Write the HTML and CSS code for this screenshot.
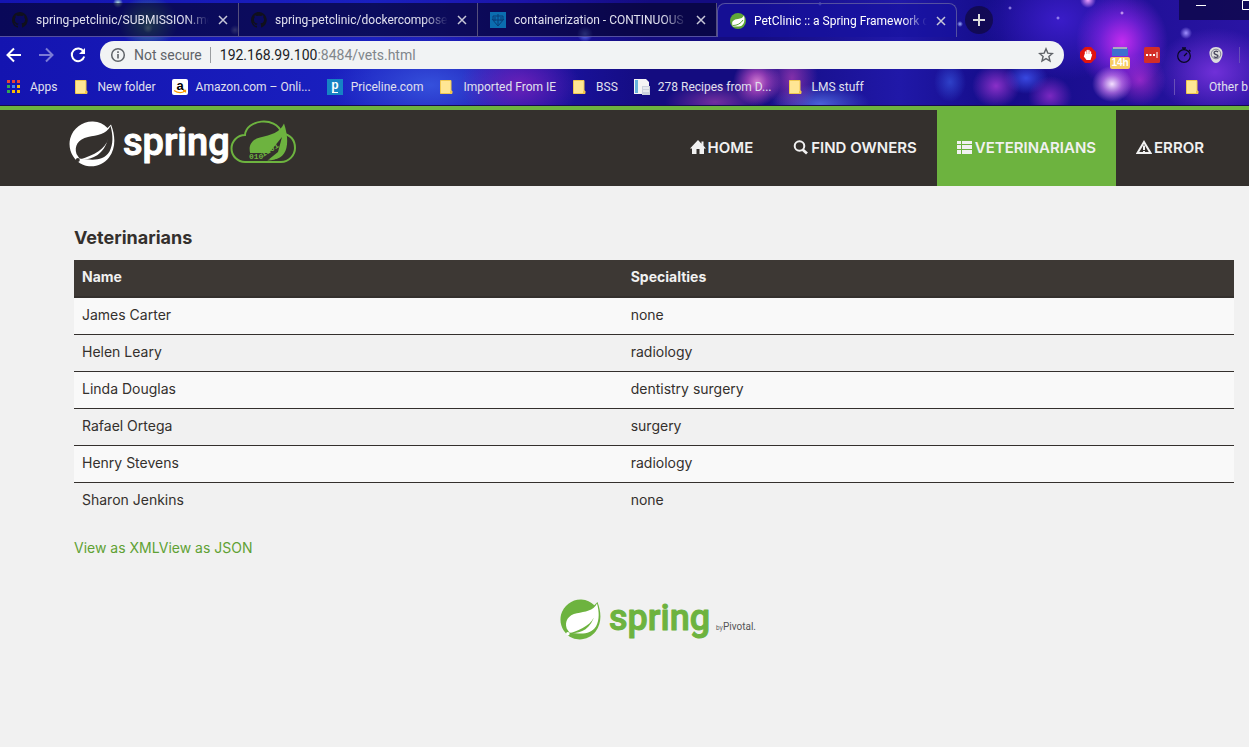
FILE: index.html
```html
<!DOCTYPE html>
<html lang="en">
<head>
<meta charset="utf-8">
<title>PetClinic :: a Spring Framework demonstration</title>
<link rel="stylesheet" href="styles.css">
</head>
<body>
<svg class="defs" aria-hidden="true">
  <symbol id="close" viewBox="0 0 12 12"><path d="M2 2l8 8M10 2l-8 8" stroke="currentColor" stroke-width="1.5"/></symbol>
  <symbol id="github" viewBox="0 0 16 16"><path fill="#10101c" d="M8 0C3.6 0 0 3.600 0 8c0 3.500 2.300 6.500 5.500 7.600.4.100.5-.2.500-.4v-1.400c-2.200.5-2.700-1-2.700-1-.4-.9-.9-1.200-.9-1.200-.7-.5.100-.5.100-.5.800.1 1.200.8 1.200.8.700 1.300 1.900.9 2.300.7.100-.5.300-.9.500-1.100-1.800-.2-3.600-.9-3.600-4 0-.9.300-1.600.8-2.100-.1-.2-.4-1 .1-2.100 0 0 .7-.2 2.200.8a7.700 7.700 0 0 1 4 0c1.500-1 2.200-.8 2.200-.8.400 1.100.2 1.900.1 2.100.5.600.8 1.300.8 2.100 0 3.100-1.900 3.700-3.700 3.900.3.300.6.800.6 1.500v2.200c0 .2.100.5.500.4A8 8 0 0 0 8 0z"/></symbol>
  <symbol id="folder" viewBox="0 0 16 16"><path d="M1.500 1.500h10.500v10.500h1v2.500h-11.500z" fill="#ffe694" stroke="#f0c850"/><path d="M11 14.500v-2.500h2v2.500z" fill="#f3c646"/></symbol>
  <symbol id="leaf" viewBox="0 0 46 46"><path d="M42 3.500C46.500 15 47 27 40 36.500 34 44.500 23 47.500 14 43.700 4 39.500-1.500 28 1.200 17.500 4 7 14 0 24 .5c6 .3 10.500 2.500 14.500 6.500z" fill="currentColor"/><path class="leaf-cut" d="M41.500 5C37.500 13.500 28 14 19 16 9 18 5 25 7.500 33l3 4.500C22 39 34 41 40.500 30.500 44.500 23 44 14 41.500 5z"/><path d="M39 17.500C37 28 25 34 11 38.500c12 .5 24-4.500 28-21z" fill="currentColor"/><circle class="leaf-cut" cx="8.800" cy="39" r="2"/></symbol>
</svg>

<header class="browser">
  <div class="tabstrip">
    <div class="tab"><svg class="fav"><use href="#github"/></svg><span class="tab-title">spring-petclinic/SUBMISSION.md</span><button class="close" aria-label="Close tab"><svg><use href="#close"/></svg></button></div>
    <div class="tab"><svg class="fav"><use href="#github"/></svg><span class="tab-title">spring-petclinic/dockercomposeu</span><button class="close" aria-label="Close tab"><svg><use href="#close"/></svg></button></div>
    <div class="tab"><svg class="fav" viewBox="0 0 16 16"><path fill="#0b6db0" d="M0 0h16v16H0z"/><path d="M2 7l6 7 6-7M3 4h10v4H3zM8 2v11M5 5v4M11 5v4" fill="none" stroke="#083c78"/></svg><span class="tab-title">containerization - CONTINUOUS -</span><button class="close" aria-label="Close tab"><svg><use href="#close"/></svg></button></div>
    <div class="tab active"><svg class="fav green" viewBox="0 0 16 16"><circle cx="8" cy="8" r="8" fill="#5fa637"/><path d="M14 2.500c1.500 6-.5 11-5.500 11H3C.5 8 4 6.500 8 6c3-.3 5-1.500 6-3.500z" fill="#fff"/><path d="M3 12.500c4 0 8-2 10-5.500" fill="none" stroke="#5fa637"/></svg><span class="tab-title">PetClinic :: a Spring Framework de</span><button class="close" aria-label="Close tab"><svg><use href="#close"/></svg></button></div>
    <button class="newtab" aria-label="New tab"><svg viewBox="0 0 28 28"><path d="M14 8v12M8 14h12" stroke="#ddd" stroke-width="2"/></svg></button>
    <div class="winbtns"><button aria-label="Minimize"><svg viewBox="0 0 45 20"><path d="M17 5.500h10" stroke="#fff"/></svg></button><button aria-label="Maximize"><svg viewBox="0 0 45 20"><path d="M18.500.5h9v9h-9z" fill="none" stroke="#fff"/></svg></button></div>
  </div>

  <div class="toolbar">
    <div class="history">
      <button aria-label="Back"><svg viewBox="0 0 16 16"><path d="M15 8H2M8 1.500L1.500 8 8 14.500" fill="none" stroke="#fff" stroke-width="2"/></svg></button>
      <button aria-label="Forward"><svg viewBox="0 0 16 16"><path d="M1 8h13M8 1.500L14.500 8 8 14.500" fill="none" stroke="#7c7cd6" stroke-width="2"/></svg></button>
      <button aria-label="Reload"><svg viewBox="0 0 16 16"><path d="M13.500 4.500A6.300 6.300 0 1 0 14.200 9.500" fill="none" stroke="#fff" stroke-width="2"/><path d="M15 1v6H9z" fill="#fff"/></svg></button>
    </div>
    <div class="omnibox">
      <svg class="info" viewBox="0 0 16 16"><circle cx="8" cy="8" r="6.300" fill="none" stroke="#5f6368" stroke-width="1.500"/><path d="M8 7v4.500M8 4.300v1.600" stroke="#5f6368" stroke-width="1.600"/></svg>
      <span class="secure">Not secure</span>
      <span class="url"><b>192.168.99.100</b>:8484/vets.html</span>
      <button aria-label="Bookmark this page"><svg viewBox="0 0 16 16"><path d="M8 1.800l1.800 4.300 4.600.4-3.500 3 1.100 4.600-4-2.500-4 2.500 1.100-4.600-3.500-3 4.600-.4z" fill="none" stroke="#5f6368" stroke-width="1.400"/></svg></button>
    </div>
    <div class="extensions">
      <button aria-label="Ad blocker"><svg viewBox="0 0 16 16"><path d="M5 0h6l5 5v6l-5 5H5l-5-5V5z" fill="#e0140f"/><path d="M5.500 8.500V5M7.200 8V3.500M8.900 8V3.500M10.500 8V5" stroke="#fff" stroke-width="1.400" stroke-linecap="round"/><path d="M4.800 7h6.400l1 .5-1.700 5.500H6.500L3.800 9.500z" fill="#fff"/></svg></button>
      <button class="timer" aria-label="Calendar"><svg viewBox="0 0 16 10"><path d="M0 1h16v8H0z" fill="#3d6fd0"/><path d="M1 0h14v2H1z" fill="#aab"/></svg><span>14h</span></button>
      <button aria-label="Password manager"><svg viewBox="0 0 16 16"><rect width="16" height="16" rx="1.500" fill="#d32d27"/><path d="M2 8h2M5.500 8h2M9 8h2" stroke="#fff" stroke-width="1.800"/><path d="M13 5v6" stroke="#fff"/></svg></button>
      <button aria-label="Stopwatch"><svg viewBox="0 0 16 16"><circle cx="8" cy="9" r="6.300" fill="none" stroke="#080820" stroke-width="1.200"/><path d="M6 1h4M8 1v2M8 9l3-3M13 3l1.500 1.500" stroke="#080820" stroke-width="1.300"/></svg></button>
      <button aria-label="Saver"><svg viewBox="0 0 16 16"><path d="M8 0c4.500 0 7 3 6.500 7-.4 4-3 9-6.500 9S2 11 1.500 7C1 3 3.500 0 8 0z" fill="#ddd"/><circle cx="8" cy="7" r="4.800" fill="none" stroke="#6a6880" stroke-width=".8"/><path d="M10 5C8 3 5 5 6.500 6.800c1 1 3.500.5 3.500 2.200S7 11 6 9.500" fill="none" stroke="#44445a" stroke-width="1.300"/></svg></button>
    </div>
  </div>

  <nav class="bookmarks" aria-label="Bookmarks">
    <a href="#"><svg viewBox="0 0 16 16"><path d="M1 1h3v3H1zM6 1h3v3H6zM11 1h3v3h-3z" fill="#ea4335"/><path d="M1 6h3v3H1z" fill="#34a853"/><path d="M6 6h3v3H6z" fill="#4285f4"/><path d="M11 6h3v3h-3zM6 11h3v3H6zM11 11h3v3h-3z" fill="#fbbc05"/><path d="M1 11h3v3H1z" fill="#34a853"/></svg>Apps</a>
    <a href="#"><svg><use href="#folder"/></svg>New folder</a>
    <a href="#"><svg viewBox="0 0 16 16"><rect width="16" height="16" rx="2" fill="#fff"/><text x="8" y="11" text-anchor="middle" class="amz">a</text><path d="M2 11.500q6 4 11 .5M11 11.500h2.500v2" fill="none" stroke="#f90" stroke-width="1.300"/></svg>Amazon.com – Onli...</a>
    <a href="#"><svg viewBox="0 0 16 16"><path d="M0 0h16v16H0z" fill="#1683c4"/><text x="8" y="10" text-anchor="middle" class="pcl">p</text><path d="M5 13.500h6" stroke="#fff"/></svg>Priceline.com</a>
    <a href="#"><svg><use href="#folder"/></svg>Imported From IE</a>
    <a href="#"><svg><use href="#folder"/></svg>BSS</a>
    <a href="#"><svg viewBox="0 0 16 16"><path d="M0 0h12l3 3v12H0z" fill="#f4f4f4"/><path d="M1 1h3v13H1z" fill="#69b4dc"/><path d="M8 7h8v9H8z" fill="#ccd2dc"/><path d="M9 9h6M9 12h6" stroke="#fff"/></svg>278 Recipes from D...</a>
    <a href="#"><svg><use href="#folder"/></svg>LMS stuff</a>
    <a href="#" class="other"><svg><use href="#folder"/></svg>Other b</a>
  </nav>
</header>

<div class="navbar">
  <a class="brand" href="#" aria-label="Spring"><svg viewBox="0 0 230 50">
    <svg x="1" y="2" width="46" height="46"><use href="#leaf"/></svg>
    <text class="wordmark" x="55" y="36">spring</text>
    <path d="M177 43.500a12 12 0 0 1 0-27c1-15 30-20 37-2 9 2 13 8 13 15s-6 14-14 14z" transform="translate(0 -.5)" fill="none" stroke="#6db33f" stroke-width="2"/>
    <path d="M216 4.500c6 18 4 34-10 36-7 .5-14-1-22-1-5-11-2-18.500 8-21 11-2.500 20-5 24-14z" fill="#6db33f"/>
    <path d="M181 34h20l13-16-4 15-10 8h-19z" fill="#34302d"/>
    <path d="M199 41.500c9-3 14-8 16-19 2 12-4 19-16 19z" fill="#6db33f"/>
    <text class="bits" x="181" y="40">010</text><text class="bits" x="195" y="38" transform="rotate(-32 195 38)">1101</text>
  </svg></a>
  <nav class="menu" aria-label="Main">
    <a href="#"><svg viewBox="0 0 16 16"><path d="M8 0L0 8.500h2V14h4.500V9h3v5H14V8.500h2l-2.500-2.700V1.500h-2v2.300z"/></svg>HOME</a>
    <a href="#"><svg viewBox="0 0 16 16"><circle cx="6.500" cy="6" r="4.800" fill="none" stroke="currentColor" stroke-width="2"/><path d="M9.500 9.500l4.500 4" stroke="currentColor" stroke-width="2.800"/></svg>FIND OWNERS</a>
    <a href="#" class="current"><svg viewBox="0 0 16 16"><path d="M0 1h4v3H0zM5 1h10v3H5zM0 5h4v4H0zM5 5h10v4H5zM0 10h4v4H0zM5 10h10v4H5z"/></svg>VETERINARIANS</a>
    <a href="#"><svg viewBox="0 0 16 16"><path d="M8 2l6.500 11h-13z" fill="none" stroke="currentColor" stroke-width="2"/><path d="M8 5.500v4.500M8 11v2" stroke="currentColor" stroke-width="2"/></svg>ERROR</a>
  </nav>
</div>

<main>
  <h1>Veterinarians</h1>
  <table>
    <thead><tr><th>Name</th><th>Specialties</th></tr></thead>
    <tbody>
      <tr><td>James Carter</td><td>none</td></tr>
      <tr><td>Helen Leary</td><td>radiology</td></tr>
      <tr><td>Linda Douglas</td><td>dentistry surgery</td></tr>
      <tr><td>Rafael Ortega</td><td>surgery</td></tr>
      <tr><td>Henry Stevens</td><td>radiology</td></tr>
      <tr><td>Sharon Jenkins</td><td>none</td></tr>
    </tbody>
  </table>
  <p class="links"><a href="#">View as XML</a><a href="#">View as JSON</a></p>
  <footer><svg viewBox="0 0 200 42" role="img" aria-label="Spring by Pivotal"><svg x="1" y="0" width="41" height="41"><use href="#leaf"/></svg><text class="wordmark small" x="50" y="31">spring</text><text class="by" x="157" y="31">by</text><text class="pivotal" x="164" y="31">Pivotal.</text></svg></footer>
</main>
</body>
</html>
```

FILE: styles.css
```css
* { box-sizing: border-box; }
body { margin: 0; min-height: 100vh; background: #f1f1f1; color: #34302d; font: 14px/20px Inter, sans-serif; overflow-x: hidden; }
a { color: inherit; text-decoration: none; }
button { border: 0; padding: 0; background: none; color: inherit; display: flex; flex: none; }
.defs { position: absolute; width: 0; height: 0; }

.browser {
  overflow: hidden; color: #e0e0ee; font: 12px/16px Roboto, sans-serif; border-bottom: 1px solid #150a50;
  background:
    radial-gradient(circle at 148px 28px, #9fd8c8 0, transparent 5px),
    radial-gradient(circle at 118px 3px, #b0e0d8 0, transparent 5px),
    radial-gradient(circle at 585px 34px, #6a80ff 0, transparent 8px),
    radial-gradient(circle at 235px 30px, #8088e8 0, transparent 5px),
    radial-gradient(circle at 1088px 0, #f0a0ff 0, transparent 8px),
    radial-gradient(circle at 1186px 33px, #a090ff 0, transparent 6px),
    radial-gradient(circle at 1010px 8px, #c0b0ff 0, transparent 2px),
    radial-gradient(circle at 1122px 13px, #f0d0ff 0, transparent 2px),
    radial-gradient(circle at 1058px 18px, #c0b0ff 0, transparent 2px),
    radial-gradient(circle at 960px 24px, #a0b0ff 0, transparent 3px),
    radial-gradient(circle at 820px 4px, #a0b0ff 0, transparent 2px),
    radial-gradient(circle at 757px 82px, #f08cdcdd 0, #c850c8aa 10px, transparent 24px),
    radial-gradient(ellipse 26px 36px at 792px 78px, #b840b8aa, transparent),
    radial-gradient(ellipse 50px 20px at 715px 102px, #a040b0aa, transparent),
    radial-gradient(ellipse 50px 20px at 820px 104px, #4a60d8, transparent),
    radial-gradient(ellipse 20px 18px at 1112px 84px, #f4e0ff, #d080f0aa 50%, transparent),
    radial-gradient(ellipse 26px 26px at 1140px 80px, #c030d8aa, transparent),
    radial-gradient(ellipse 46px 50px at 1122px 42px, #c42cf0, #8a24e8aa 50%, transparent),
    radial-gradient(ellipse 24px 22px at 996px 86px, #8a30c8, transparent),
    radial-gradient(ellipse 22px 20px at 1050px 96px, #7a28c0, transparent),
    radial-gradient(ellipse 16px 20px at 950px 82px, #3858e0aa, transparent),
    radial-gradient(ellipse 22px 16px at 1026px 78px, #3848e0, transparent),
    radial-gradient(ellipse 60px 44px at 1215px 72px, #7030d8, transparent),
    radial-gradient(ellipse 80px 60px at 1060px 20px, #3a1cc8, transparent),
    radial-gradient(ellipse 60px 40px at 520px 85px, #6a20b8, transparent),
    radial-gradient(ellipse 100px 50px at 430px 85px, #3550dc, transparent),
    radial-gradient(ellipse 30px 26px at 148px 22px, #4e9a8a, transparent),
    linear-gradient(90deg, #1414b0 0, #1a20c0 30%, #1c14a8 42%, #140c80 52%, #140c80 60%, #2018a8 72%, #140c88 80%, #2a14a4 100%);
}
.tabstrip { display: flex; align-items: stretch; height: 37px; padding-top: 3px; }
.tab { flex: none; width: 239px; display: flex; align-items: center; gap: 8px; padding: 0 9px 0 12px; background: #04032ca8; border-right: 1px solid #55507c; border-bottom: 1px solid #5450a0; }
.tab svg { display: block; }
.fav { flex: none; width: 16px; height: 16px; }
.tab-title { flex: 1; min-width: 0; white-space: nowrap; mask-image: linear-gradient(90deg, #000 86%, transparent); }
.close { color: #c8c8d8; }
.close svg { width: 12px; height: 12px; }
.tab.active { width: 240px; background: #1712a0a0; border: 1px solid #5450a0; border-bottom: 0; border-radius: 8px 8px 0 0; color: #fff; }
.newtab { width: 28px; height: 28px; margin: 3px 0 0 8px; border-radius: 50%; background: #0f0838aa; }
.newtab svg { width: 28px; }
.winbtns { display: flex; flex: none; margin: -3px 0 0 186px; height: 20px; background: #0a0640c0; }
.winbtns svg { width: 45px; height: 20px; }

.toolbar { display: flex; align-items: center; gap: 14px; height: 36px; padding-left: 6px; }
.history { display: flex; gap: 16px; }
.history svg { width: 16px; height: 16px; }
.omnibox { flex: 1; display: flex; align-items: center; height: 28px; border-radius: 14px; padding: 0 10px; background: #f1f3f4; color: #5f6368; font-size: 14px; }
.omnibox svg { width: 16px; height: 16px; }
.secure { margin-left: 8px; padding-right: 8px; border-right: 1px solid #9a9da0; }
.url { flex: 1; margin-left: 9px; color: #80868b; }
.url b { color: #202124; font-weight: 400; }
.extensions { flex: none; display: flex; align-items: center; gap: 16px; width: 162px; height: 16px; margin-right: 9px; padding-left: 2px; border-right: 1px solid #6850b8; }
.extensions svg { width: 16px; height: 16px; }
.timer { flex-direction: column; align-items: center; width: 20px; margin: 6px -2px 0; }
.extensions .timer svg { flex: none; height: 10px; }
.timer span { width: 20px; background: #f8cc60; border-radius: 2px; color: #fff; font: bold 10px/12px "Liberation Sans", sans-serif; text-align: center; }

.bookmarks { display: flex; align-items: center; gap: 16px; height: 32px; padding: 0 0 4px 6px; white-space: nowrap; }
.bookmarks a { flex: none; display: flex; align-items: center; gap: 8px; }
.bookmarks svg { width: 16px; height: 16px; }
.bookmarks .other { width: 75px; margin-left: auto; padding-left: 10px; border-left: 1px solid #6850b8; }
.amz { font: bold 13px "Liberation Sans", sans-serif; fill: #000; }
.pcl { font: bold 12px "Liberation Sans", sans-serif; fill: #fff; }

.navbar { display: flex; justify-content: space-between; border-top: 4px solid #6db33f; background: #34302d; color: #f1f1f1; padding: 0 25px 0 68px; }
.brand { display: block; padding-top: 9px; color: #fff; --cut: #34302d; }
.brand svg { display: block; }
.brand > svg { width: 230px; height: 50px; }
.leaf-cut { fill: var(--cut); }
.wordmark { font: 500 38px Roboto, sans-serif; fill: currentColor; stroke: currentColor; stroke-width: 1px; stroke-linejoin: round; }
.bits { font: bold 8px "Liberation Mono", monospace; fill: #6db33f; }
.menu { display: flex; font: 600 15px/20px Inter, sans-serif; }
.menu a { display: flex; align-items: center; gap: 2px; padding: 28px 20px; }
.menu svg { width: 16px; height: 16px; fill: currentColor; }
.menu .current { background: #6db33f; }

main { padding: 41px 15px 0 74px; }
h1 { margin: 0 0 11px; font: 700 18px/22px Inter, sans-serif; }
table { width: 100%; border-collapse: collapse; table-layout: fixed; }
th { text-align: left; padding: 7px 8px 9px; background: #3d3834; color: #f1f1f1; border-bottom: 2px solid #34302d; font-weight: 700; }
th:first-child { width: 47.3%; }
td { padding: 7px 8px 9px; border-top: 1px solid #34302d; }
tbody tr:nth-child(odd) { background: #f9f9f9; }
.links { margin: 19px 0 41px; color: #5fa134; }
footer { display: flex; justify-content: center; padding-left: 10px; color: #6db33f; --cut: #fff; }
footer > svg { width: 200px; height: 42px; }
.small { font-size: 36px; }
.by { font: 6px Inter, sans-serif; fill: #555; }
.pivotal { font: 10px Roboto, sans-serif; fill: #555; }
```
